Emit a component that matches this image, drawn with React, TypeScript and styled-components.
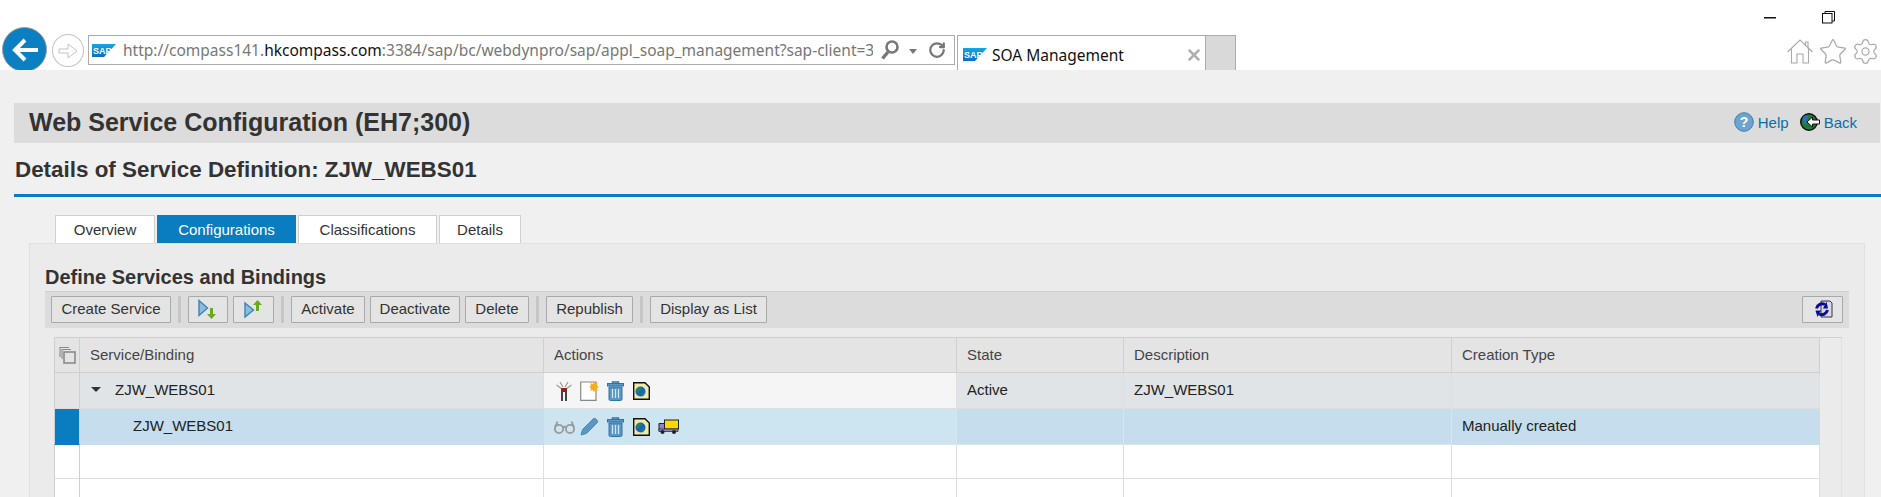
import React from 'react'
import styled, { createGlobalStyle } from 'styled-components'
import { RotateCw, Settings, Star, X } from 'lucide-react'

const GlobalStyle = createGlobalStyle`
  html, body {
    margin: 0;
    padding: 0;
    background: #f0f0f0;
    font-family: "Liberation Sans", Arial, sans-serif;
    overflow: hidden;
  }
`

const Page = styled.div`
  width: 1881px;
  height: 497px;
  overflow: hidden;
`

const Chrome = styled.div`
  height: 70px;
  background: #fff;
  display: flex;
  flex-direction: column;
  overflow: hidden;
`

const WindowControls = styled.div`
  height: 27px;
  flex: none;
  display: flex;
  justify-content: flex-end;
  align-items: center;
  gap: 46px;
  padding: 0 46px 0 0;
  margin-top: 4px;
  margin-bottom: -4px;
`

const NavRow = styled.div`
  display: flex;
  align-items: flex-start;
  flex: none;
  padding-left: 2px;
`

const BackCircle = styled.div`
  width: 45px;
  height: 45px;
  flex: none;
  border-radius: 50%;
  background: #0a80c2;
  border: 1px solid #9a9a9a;
  display: flex;
  align-items: center;
  justify-content: center;
  box-sizing: border-box;
`

const ForwardCircle = styled.div`
  width: 32px;
  height: 33px;
  border-radius: 50%;
  margin: 7px 0 0 5px;
  flex: none;
  border: 1px solid #c4c4c4;
  box-sizing: border-box;
  display: flex;
  align-items: center;
  justify-content: center;
`

const AddressBar = styled.div`
  width: 867px;
  height: 30px;
  margin: 8px 0 0 4px;
  flex: none;
  box-sizing: border-box;
  border: 1px solid #ababab;
  display: flex;
  align-items: center;
  padding: 0 0 0 3px;
  font-size: 15.5px;
  font-family: "Noto Sans", sans-serif;
  color: #777;
`

const Url = styled.div`
  width: 750px;
  flex: none;
  margin-left: 7px;
  white-space: nowrap;
  overflow: hidden;
`

const UrlHost = styled.span`
  color: #111;
`

const AddressIcons = styled.div`
  display: flex;
  align-items: center;
  margin-left: 8px;
  color: #777;
`

const Caret = styled.span`
  width: 0;
  height: 0;
  border-left: 4.5px solid transparent;
  border-right: 4.5px solid transparent;
  border-top: 5px solid #777;
  margin: 2px 11px 0 10px;
`

const BrowserTab = styled.div`
  width: 249px;
  height: 36px;
  margin: 8px 0 0 2px;
  box-sizing: border-box;
  border: 1px solid #ababab;
  border-bottom: none;
  display: flex;
  align-items: center;
  padding: 2px 2px 0 5px;
  font-family: "Noto Sans", sans-serif;
  font-size: 15.5px;
  color: #111;
  flex: none;
`

const BrowserTabTitle = styled.span`
  margin-left: 5px;
  flex: 1;
`

const NewTab = styled.div`
  width: 30px;
  height: 36px;
  margin-top: 8px;
  box-sizing: border-box;
  background: #d9d9d9;
  border: 1px solid #ababab;
  border-left: none;
  border-bottom: none;
  flex: none;
`

const ToolIcons = styled.div`
  margin-left: auto;
  display: flex;
  padding: 12px 3px 0 0;
  color: #aaa;
  gap: 7px;
`

const HeaderBar = styled.div`
  margin: 33px 1px 0 14px;
  height: 40px;
  box-sizing: border-box;
  background: #dcdcdc;
  display: flex;
  align-items: center;
  justify-content: space-between;
  padding: 0 23px 2px 15px;
`

const AppTitle = styled.h1`
  margin: 0;
  font-size: 25px;
  font-weight: 700;
  color: #333;
`

const HeaderLinks = styled.div`
  display: flex;
  align-items: center;
  gap: 11px;
`

const HeaderLink = styled.a`
  display: flex;
  align-items: center;
  gap: 4px;
  color: #0a6ea8;
  font-size: 15px;
`

const PageHeading = styled.div`
  margin-left: 14px;
  height: 54px;
  box-sizing: border-box;
  border-bottom: 3px solid #0a7cc0;
  font-size: 22.4px;
  line-height: 26px;
  font-weight: 700;
  color: #333;
  padding: 14px 0 0 1px;
`

const TabStrip = styled.div`
  display: flex;
  gap: 2px;
  margin: 18px 0 0 55px;
  height: 28px;
`

const PageTab = styled.div<{ $active?: boolean; $w: number }>`
  width: ${(p) => p.$w}px;
  box-sizing: border-box;
  display: flex;
  align-items: center;
  justify-content: center;
  font-size: 15px;
  color: ${(p) => (p.$active ? '#fff' : '#333')};
  background: ${(p) => (p.$active ? '#0a7cc0' : '#fff')};
  border: 1px solid ${(p) => (p.$active ? '#0a7cc0' : '#cfcfcf')};
  border-bottom: none;
`

const Panel = styled.div`
  margin: 0 16px 0 29px;
  height: 300px;
  background: #ebebeb;
  border: 1px solid #e0e0e0;
  border-bottom: none;
  box-sizing: border-box;
  padding: 21px 15px 0 15px;
`

const PanelTitle = styled.h2`
  margin: 0;
  font-size: 20px;
  line-height: 24px;
  font-weight: 700;
  color: #333;
`

const Toolbar = styled.div`
  height: 37px;
  box-sizing: border-box;
  margin-top: 2px;
  background: #dcdcdc;
  border-top: 1px solid #cfcfcf;
  display: flex;
  align-items: flex-start;
  padding: 4px 6px 0;
  gap: 5px;
`

const ToolButton = styled.button<{ $w: number }>`
  width: ${(p) => p.$w}px;
  height: 27px;
  flex: none;
  padding: 0 0 2px;
  background: #e4e4e4;
  border: 1px solid #a9a9a9;
  border-radius: 1px;
  font-family: "Liberation Sans", Arial, sans-serif;
  font-size: 15px;
  color: #333;
  display: flex;
  align-items: center;
  justify-content: center;
`

const ToolSeparator = styled.span`
  width: 3px;
  height: 27px;
  background: #c6c6c6;
  margin: 0 2px;
  flex: none;
`

const ToolSpacer = styled.div`
  flex: 1;
`

const TableWrap = styled.div`
  margin: 9px 7px 0 9px;
  border-top: 1px solid #cfcfcf;
  border-right: 1px solid #e0e0e0;
  padding-right: 21px;
`

const GridRow = styled.div<{ $h: number }>`
  display: grid;
  grid-template-columns: 26px 464px 413px 167px 328px 368px;
  height: ${(p) => p.$h}px;
  box-sizing: border-box;
`

const Cell = styled.div<{ $tone: string; $line?: string; $ink?: string }>`
  background: ${(p) => p.$tone};
  border-right: 1px solid ${(p) => p.$line ?? '#dedede'};
  border-bottom: 1px solid ${(p) => p.$line ?? '#dedede'};
  display: flex;
  align-items: center;
  padding: 0 0 2px 10px;
  font-size: 15px;
  color: ${(p) => p.$ink ?? '#222'};
  box-sizing: border-box;
  min-width: 0;
`

const SelectorCell = styled(Cell)`
  padding: 0;
  justify-content: center;
  border-left: 1px solid #cfcfcf;
  border-right: 1px solid #cfcfcf;
`

const ActionsCell = styled(Cell)`
  padding: 0 0 0 7px;
`

const ExpandCaret = styled.span`
  width: 0;
  height: 0;
  border-left: 5px solid transparent;
  border-right: 5px solid transparent;
  border-top: 5px solid #333;
  margin: 0 14px 0 1px;
`

const Indent = styled.span`
  padding-left: 43px;
`

const IconRow = styled.div`
  display: grid;
  grid-template-columns: 26px 25px 26px 27px 26px;
  justify-items: center;
  align-items: center;
`

function SapLogo() {
  return (
    <svg width="24" height="13" viewBox="0 0 24 13">
      <defs>
        <linearGradient id="sap" x1="0" y1="0" x2="0" y2="1">
          <stop offset="0" stopColor="#15a5e6" />
          <stop offset="1" stopColor="#0a6fc2" />
        </linearGradient>
      </defs>
      <path d="M0 0H24L12 13H0Z" fill="url(#sap)" />
      <text x="1" y="9.500" fontSize="9" fontWeight="700" fill="#fff" fontFamily="Liberation Sans">SAP</text>
    </svg>
  )
}

function Restore() {
  return (
    <svg width="13" height="13" viewBox="0 0 13 13" fill="none" stroke="#111">
      <rect x="0.5" y="2.5" width="9.5" height="9.5" fill="#fff" />
      <path d="M3 2.5V0.5H12.5V10H10" />
    </svg>
  )
}

function Magnifier() {
  return (
    <svg width="18" height="20" viewBox="0 0 18 20" fill="none" stroke="#777">
      <circle cx="11" cy="7" r="5.500" strokeWidth="2.600" />
      <path d="M7 12 1.500 18.500" strokeWidth="3.400" />
    </svg>
  )
}

function HomeOutline() {
  return (
    <svg width="26" height="25" viewBox="0 0 26 25" fill="none" stroke="#aaa" strokeWidth="1.100">
      <path d="M0.500 13 13 1 25.500 13" />
      <path d="M4.500 10V24H10V15H16V24H21.500V10" />
      <path d="M18.500 7V3H21V9.500" />
    </svg>
  )
}

function HelpIcon() {
  return (
    <svg width="20" height="20" viewBox="0 0 20 20">
      <circle cx="10" cy="10" r="9.3" fill="#6ea3cf" stroke="#3f7fb5" />
      <text x="10" y="15" textAnchor="middle" fontSize="14" fontWeight="700" fill="#fff" fontFamily="Liberation Sans">?</text>
    </svg>
  )
}

function BackGlobe() {
  return (
    <svg width="20" height="20" viewBox="0 0 20 20">
      <circle cx="9" cy="10" r="8.300" fill="#1d7a3a" stroke="#111" strokeWidth="1.400" />
      <path d="M3 5c2-2 5-2 5 0s-2 3-2 6-3 1-3-6z" fill="#2a6fc0" />
      <path d="M19.500 8H12.500V5L7 10l5.500 5v-3h7z" fill="#fff" stroke="#111" />
    </svg>
  )
}

function StepDown() {
  return (
    <svg width="20" height="20" viewBox="0 0 20 20">
      <path d="M1 1.500 9.500 9 1 16.500Z" fill="#8fbcdc" stroke="#3c83b6" strokeWidth="1.400" />
      <path d="M12 9h3v6h3l-4.500 5-4.500-5h3z" fill="#69a81f" />
    </svg>
  )
}

function StepUp() {
  return (
    <svg width="20" height="20" viewBox="0 0 20 20">
      <path d="M1 4 9.500 11 1 18Z" fill="#8fbcdc" stroke="#3c83b6" strokeWidth="1.400" />
      <path d="M12 12h3V6h3l-4.500-5-4.500 5h3z" fill="#69a81f" />
    </svg>
  )
}

function RefreshDoc() {
  return (
    <svg width="20" height="18" viewBox="0 0 20 18">
      <path d="M8 1H17L19 3V17H8Z" fill="#d7dbe6" stroke="#222" strokeWidth="0.900" />
      <path d="M3.500 8.500A6 6 0 0 1 12 4.500" fill="none" stroke="#0b0b96" strokeWidth="3" />
      <path d="M15 8.500 10 8.500 13.500 1.500Z" fill="#0b0b96" />
      <path d="M14.500 10A6 6 0 0 1 6 14" fill="none" stroke="#0b0b96" strokeWidth="3" />
      <path d="M2.500 10.500 8 10.500 4.500 17Z" fill="#0b0b96" />
    </svg>
  )
}

function SelectAll() {
  return (
    <svg width="18" height="18" viewBox="0 0 18 18" fill="none" stroke="#8a8a8a" strokeWidth="1.100">
      <path d="M2 11V1.500H11" />
      <path d="M4 13V3.500H13" />
      <rect x="6" y="6" width="11" height="11" strokeWidth="1.600" />
    </svg>
  )
}

function Antenna() {
  return (
    <svg width="16" height="20" viewBox="0 0 16 20">
      <path d="M4 1 7 6M12 1 9 6M0.500 4 6 8M15.500 4 10 8" stroke="#999" strokeWidth="1.200" />
      <rect x="5" y="7" width="6" height="13" fill="#444" />
      <rect x="5.500" y="7" width="5" height="4" fill="#a81616" />
      <rect x="7" y="11" width="2" height="9" fill="#f5f5f5" />
    </svg>
  )
}

function NewDoc() {
  return (
    <svg width="19" height="20" viewBox="0 0 19 20">
      <path d="M0.700 1H16V19.300H0.700Z" fill="#fff" stroke="#888" strokeWidth="1.200" />
      <path d="M14 0.500 15 3 17.700 2 16.800 4.600 19 6 16.800 7.200 17.700 9.800 15 8.900 14 11.500 12.800 8.900 10.200 9.800 11 7.200 9 6 11 4.600 10.200 2 12.800 3Z" fill="#f7ac1c" />
    </svg>
  )
}

function Trash() {
  return (
    <svg width="17" height="20" viewBox="0 0 17 20" fill="#5b97c4" stroke="#2d74a8">
      <path d="M5.500 2.500V1h6v1.500" fill="none" strokeWidth="1.400" />
      <rect x="0.500" y="2.500" width="16" height="2.500" />
      <path d="M2 6H15V18C15 19 14.500 19.500 13.500 19.500H3.500C2.500 19.500 2 19 2 18Z" />
      <path d="M5.500 8V17M8.500 8V17M11.500 8V17" stroke="#d8e8f2" strokeWidth="1.200" fill="none" />
    </svg>
  )
}

function WebDoc() {
  return (
    <svg width="17" height="18" viewBox="0 0 17 18">
      <path d="M0.700 0.700H12L16.300 5V17.300H0.700Z" fill="#f3e9a8" stroke="#111" strokeWidth="1.400" />
      <circle cx="7.500" cy="9.500" r="5" fill="#1c62c4" />
      <path d="M5 5.500c2-1 4 0 3 2s-3 1-3 3-3-2 0-5zM9.500 10.500c2-1 3 0 1 3s-2-2-1-3z" fill="#1d8f3d" />
    </svg>
  )
}

function Glasses() {
  return (
    <svg width="21" height="14" viewBox="0 0 21 14" fill="none" stroke="#999" strokeWidth="1.800">
      <circle cx="5" cy="9" r="4.100" />
      <circle cx="16" cy="9" r="4.100" />
      <path d="M9 7.500c1-1 2-1 3 0M1 7 3.500 1.500M20 7 17.500 1.500" />
    </svg>
  )
}

function Pencil() {
  return (
    <svg width="19" height="19" viewBox="0 0 19 19">
      <path d="M1 18 2.500 12.500 13 2 C14 1 15 1 16.500 2.500 C18 4 18 5 17 6L6.500 16.500Z" fill="#5b97c4" stroke="#2d74a8" strokeWidth="0.700" />
    </svg>
  )
}

function Truck() {
  return (
    <svg width="21" height="16" viewBox="0 0 21 16">
      <rect x="6.500" y="1" width="14" height="9" fill="#ffd800" stroke="#222" />
      <path d="M1 4.500H6.500V12H1Z" fill="#8a86c8" stroke="#222" />
      <rect x="1" y="10" width="19" height="2.500" fill="#8a86c8" stroke="#222" strokeWidth="0.700" />
      <circle cx="4.500" cy="13" r="2" fill="#222" />
      <circle cx="16" cy="13" r="2" fill="#222" />
    </svg>
  )
}

const COLUMNS = ['Service/Binding', 'Actions', 'State', 'Description', 'Creation Type']

function EmptyRow({ h }: { h: number }) {
  return (
    <GridRow $h={h}>
      <SelectorCell $tone="#fff" />
      <Cell $tone="#fff" />
      <Cell $tone="#fff" />
      <Cell $tone="#fff" />
      <Cell $tone="#fff" />
      <Cell $tone="#fff" />
    </GridRow>
  )
}

export default function App() {
  return (
    <Page>
      <GlobalStyle />
      <Chrome>
        <WindowControls>
          <svg width="12" height="2"><rect width="12" height="1.500" fill="#111" /></svg>
          <Restore />
        </WindowControls>
        <NavRow>
          <BackCircle>
            <svg width="26" height="24" viewBox="0 0 26 24" fill="none" stroke="#fff" strokeWidth="4">
              <path d="M26 12H4M13 2 3 12l10 10" />
            </svg>
          </BackCircle>
          <ForwardCircle>
            <svg width="20" height="18" viewBox="0 0 20 18" fill="#fff" stroke="#c4c4c4">
              <path d="M1 7H10V2L19 9 10 16V11H1Z" />
            </svg>
          </ForwardCircle>
          <AddressBar>
            <SapLogo />
            <Url>
              http://compass141.<UrlHost>hkcompass.com</UrlHost>:3384/sap/bc/webdynpro/sap/appl_soap_management?sap-client=3
            </Url>
            <AddressIcons>
              <Magnifier />
              <Caret />
              <RotateCw size={18} strokeWidth={3} />
            </AddressIcons>
          </AddressBar>
          <BrowserTab>
            <SapLogo />
            <BrowserTabTitle>SOA Management</BrowserTabTitle>
            <X size={18} strokeWidth={3.4} color="#b0b0b0" />
          </BrowserTab>
          <NewTab />
          <ToolIcons>
            <HomeOutline />
            <Star size={26} strokeWidth={1} viewBox="1.500 1.500 21 21" />
            <Settings size={25} strokeWidth={1} viewBox="1.500 1.500 21 21" />
          </ToolIcons>
        </NavRow>
      </Chrome>
      <HeaderBar>
        <AppTitle>Web Service Configuration (EH7;300)</AppTitle>
        <HeaderLinks>
          <HeaderLink><HelpIcon />Help</HeaderLink>
          <HeaderLink><BackGlobe />Back</HeaderLink>
        </HeaderLinks>
      </HeaderBar>
      <PageHeading>Details of Service Definition: ZJW_WEBS01</PageHeading>
      <TabStrip>
        <PageTab $w={100}>Overview</PageTab>
        <PageTab $w={139} $active>Configurations</PageTab>
        <PageTab $w={139}>Classifications</PageTab>
        <PageTab $w={82}>Details</PageTab>
      </TabStrip>
      <Panel>
        <PanelTitle>Define Services and Bindings</PanelTitle>
        <Toolbar>
          <ToolButton $w={120}>Create Service</ToolButton>
          <ToolSeparator />
          <ToolButton $w={40}><StepDown /></ToolButton>
          <ToolButton $w={41}><StepUp /></ToolButton>
          <ToolSeparator />
          <ToolButton $w={74}>Activate</ToolButton>
          <ToolButton $w={90}>Deactivate</ToolButton>
          <ToolButton $w={64}>Delete</ToolButton>
          <ToolSeparator />
          <ToolButton $w={87}>Republish</ToolButton>
          <ToolSeparator />
          <ToolButton $w={117}>Display as List</ToolButton>
          <ToolSpacer />
          <ToolButton $w={41}><RefreshDoc /></ToolButton>
        </Toolbar>
        <TableWrap>
          <GridRow $h={35}>
            <SelectorCell $tone="#e4e4e4" $line="#cfcfcf"><SelectAll /></SelectorCell>
            {COLUMNS.map((c) => (
              <Cell key={c} $tone="#e4e4e4" $line="#cfcfcf" $ink="#444">{c}</Cell>
            ))}
          </GridRow>
          <GridRow $h={36}>
            <SelectorCell $tone="#e4e4e4" $line="#dcdcdc" />
            <Cell $tone="#e0e4e7"><ExpandCaret />ZJW_WEBS01</Cell>
            <ActionsCell $tone="#f5f5f5">
              <IconRow><Antenna /><NewDoc /><Trash /><WebDoc /></IconRow>
            </ActionsCell>
            <Cell $tone="#e0e4e7">Active</Cell>
            <Cell $tone="#e0e4e7">ZJW_WEBS01</Cell>
            <Cell $tone="#e0e4e7" />
          </GridRow>
          <GridRow $h={36}>
            <SelectorCell $tone="#0a7cc0" $line="#0a7cc0" />
            <Cell $tone="#c5dded" $line="#c5dded"><Indent>ZJW_WEBS01</Indent></Cell>
            <ActionsCell $tone="#cde4f1" $line="#d8e6ee">
              <IconRow><Glasses /><Pencil /><Trash /><WebDoc /><Truck /></IconRow>
            </ActionsCell>
            <Cell $tone="#c5dded" $line="#d8e6ee" />
            <Cell $tone="#c5dded" $line="#d8e6ee" />
            <Cell $tone="#c5dded" $line="#c5dded">Manually created</Cell>
          </GridRow>
          <EmptyRow h={34} />
          <EmptyRow h={34} />
        </TableWrap>
      </Panel>
    </Page>
  )
}
